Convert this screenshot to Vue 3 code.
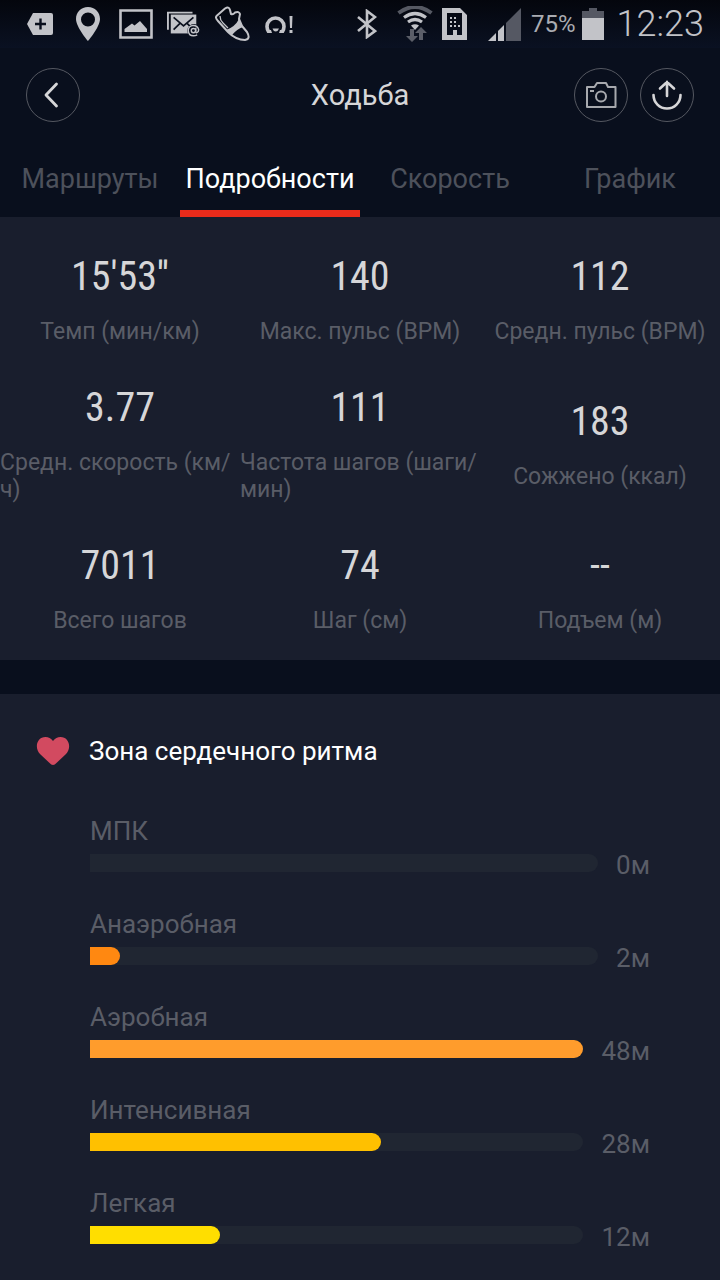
<script setup>
import { ref } from 'vue'

const tabs = ['Маршруты', 'Подробности', 'Скорость', 'График']
const active = ref(1)

const stats = [
  { value: "15'53''", label: 'Темп (мин/км)' },
  { value: '140', label: 'Макс. пульс (BPM)' },
  { value: '112', label: 'Средн. пульс (BPM)' },
  { value: '3.77', label: 'Средн. скорость (км/\u200bч)' },
  { value: '111', label: 'Частота шагов (шаги/\u200bмин)' },
  { value: '183', label: 'Сожжено (ккал)' },
  { value: '7011', label: 'Всего шагов' },
  { value: '74', label: 'Шаг (см)' },
  { value: '--', label: 'Подъем (м)' }
]

const zones = [
  { name: 'МПК', minutes: 0, share: 0, color: '#ff7a00' },
  { name: 'Анаэробная', minutes: 2, share: 5.9, color: '#ff8811' },
  { name: 'Аэробная', minutes: 48, share: 100, color: '#ff9c2c' },
  { name: 'Интенсивная', minutes: 28, share: 59, color: '#ffc000' },
  { name: 'Легкая', minutes: 12, share: 26.4, color: '#ffde00' }
]
</script>

<template>
  <div class="page">
    <div class="status">
      <div class="status-left">
        <svg width="26" height="22" viewBox="0 0 26 22"><path d="M6 0H24a2 2 0 0 1 2 2V20a2 2 0 0 1-2 2H6L0 11Z" fill="#c2c3c8" /><path d="M13.500 5.500V16.500M8 11H19" stroke="#0a0f1d" stroke-width="2.400" /></svg>
        <svg width="24" height="34" viewBox="0 0 24 34"><path fill-rule="evenodd" d="M12 0C5 0 0 5.200 0 12C0 20 12 34 12 34S24 20 24 12C24 5.200 19 0 12 0ZM12 5.500a7 7 0 1 1 0 14a7 7 0 0 1 0-14Z" fill="#c2c3c8" /></svg>
        <svg width="34" height="30" viewBox="0 0 34 30"><path d="M1.500 1.500H32.500V28.500H1.500Z" fill="none" stroke="#c2c3c8" stroke-width="2.600" /><path d="M5.500 23V20L13 14.500L15.500 16.500L21 12L28 20V23Z" fill="#c2c3c8" /></svg>
        <svg width="34" height="28" viewBox="0 0 36 28"><path d="M1 20V2H27" fill="none" stroke="#c2c3c8" stroke-width="2" /><path d="M4 4H31V24H4Z" fill="#c2c3c8" /><path d="M7 7L17.500 16L28 7M7 20L14 13M21 13L25 17" fill="none" stroke="#0a0f1d" stroke-width="1.800" /><circle cx="28.500" cy="21" r="7" fill="#0a0f1d" /><circle cx="28" cy="21" r="2.300" fill="none" stroke="#c2c3c8" stroke-width="1.500" /><path d="M30.500 18V22Q30.500 24 32 23Q33.500 22 33.500 20Q32.500 15.500 28 15.500Q22.500 16 22.500 21Q23 26.500 28 26.500Q30 26.500 32 25.500" fill="none" stroke="#c2c3c8" stroke-width="1.500" /></svg>
        <svg width="36" height="36" viewBox="0 0 36 36"><path d="M1.500 10L10 2.500Q14 0 15 4L16 8Q18 9 20 6.500Q24 5 25 8L24 13L27 20L32 26Q36 33 30 34Q21 34 13 26L3 15Q0 12 1.500 10Z" fill="none" stroke="#c2c3c8" stroke-width="2" stroke-linejoin="round" /><path d="M11 24Q20 21 24 13L28 21Q22 23 17 29Z" fill="#c2c3c8" /><path d="M5 10Q5 14 8 17L13 22" fill="none" stroke="#c2c3c8" stroke-width="1.300" /></svg>
        <svg width="28" height="17" viewBox="0 0 28 17"><path d="M4.500 17Q2 14 2 10.500A8.500 8.500 0 0 1 19 10.500Q19 14 16.500 17" fill="none" stroke="#c2c3c8" stroke-width="3.600" /><path d="M2 14H6L7 17H4ZM19 14H15L14 17H17Z" fill="#c2c3c8" /><path d="M7.500 12.500H14Q13 15.500 10.700 15.500T7.500 12.500Z" fill="#c2c3c8" /><path d="M24.500 0H27.500L27 12H25ZM24.500 14H27.500V17H24.500Z" fill="#c2c3c8" /></svg>
      </div>
      <div class="status-right">
        <svg class="bt" width="20" height="30" viewBox="0 0 20 30"><path d="M1 8L18 22L10 28V2L18 8L1 22" fill="none" stroke="#c2c3c8" stroke-width="2.600" /></svg>
        <svg class="wifi" width="36" height="36" viewBox="0 0 36 36"><path d="M1.500 7Q18-5 34.500 7" fill="none" stroke="#565963" stroke-width="4" /><path d="M7 11.500Q18 3.500 29 11.500M11 16Q18 11 25 16" fill="none" stroke="#c2c3c8" stroke-width="3.200" /><path d="M14 19.500Q18 17 22 19.500L18 24Z" fill="#c2c3c8" /><path d="M13 23H17V30H21L15 36L9 30H13ZM22 34V27H18L24 21L30 27H26V34Z" fill="#5b5e68" /></svg>
        <svg class="sim" width="25" height="32" viewBox="0 0 25 32"><path fill-rule="evenodd" d="M0 0H18L25 7V32H0ZM5 5V27H11V22H15V27H20V5Z" fill="#c2c3c8" /><path d="M8 10H10M12 10H14M8 14H10M12 14H14M8 18H10M12 18H14M16 18H18" stroke="#c2c3c8" stroke-width="2" /></svg>
        <svg class="signal" width="33" height="33" viewBox="0 0 33 33"><path d="M0 33L8 25V33Z" fill="#c2c3c8" /><path d="M10 23L16 17V33H10Z" fill="#c2c3c8" /><path d="M18 15L33 0V33H18Z" fill="#555863" /></svg>
        <span class="percent">75%</span>
        <svg class="battery" width="22" height="32" viewBox="0 0 22 32"><path d="M7 0H15V3H22V10H0V3H7Z" fill="#555863" /><path d="M0 10H22V32H0Z" fill="#c2c3c8" /></svg>
        <span class="clock">12:23</span>
      </div>
    </div>

    <header class="header">
      <button class="round" aria-label="Назад"><svg width="52" height="52" viewBox="0 0 52 52"><path d="M29.500 15L19 26L29.500 37" fill="none" stroke="#d6d6d8" stroke-width="2.800" stroke-linecap="round" stroke-linejoin="round" /></svg></button>
      <h1>Ходьба</h1>
      <div class="actions">
        <button class="round" aria-label="Камера"><svg width="52" height="52" viewBox="0 0 52 52" fill="none" stroke="#a7a9ae" stroke-width="2"><path d="M12 18H19.500L22 14H31L33 18H40.500V38H12Z" stroke-linejoin="round" /><circle cx="26" cy="27.500" r="5" /><path d="M15 22H19" /></svg></button>
        <button class="round" aria-label="Поделиться"><svg width="52" height="52" viewBox="0 0 52 52" fill="none" stroke="#d6d6d8" stroke-width="2.600" stroke-linecap="round"><path d="M26 27V13M19 19.500L26 13L33 19.500M12.500 26A13.500 13.500 0 0 0 39.500 26" /></svg></button>
      </div>
    </header>

    <nav class="tabs">
      <button v-for="(t, i) in tabs" :key="t" :class="{ active: i === active }" @click="active = i">{{ t }}</button>
    </nav>

    <section class="stats">
      <div v-for="s in stats" :key="s.label" class="stat">
        <span class="value">{{ s.value }}</span>
        <span class="label">{{ s.label }}</span>
      </div>
    </section>

    <section class="zones">
      <h2>
        <svg width="34" height="30" viewBox="0 0 34 30"><path d="M17 29Q15.500 29 13 26.500L4 18C-2 11.500 1 1 9.500 1Q14 1 17 5Q20 1 24.500 1C33 1 36 11.500 30 18L21 26.500Q18.500 29 17 29Z" fill="#d24a60" /></svg>
        Зона сердечного ритма
      </h2>
      <div v-for="z in zones" :key="z.name" class="zone">
        <div class="name">{{ z.name }}</div>
        <div class="line">
          <div class="track"><div class="fill" :style="{ width: z.share + '%', background: z.color }"></div></div>
          <span class="minutes">{{ z.minutes }}м</span>
        </div>
      </div>
    </section>
  </div>
</template>

<style>
body { background: #090f1d; }
</style>

<style scoped>
.page {
  min-height: 100vh;
  display: flex;
  flex-direction: column;
  background: #090f1d;
  color: #d6d6d8;
  font-family: Roboto, "Noto Sans", sans-serif;
}
svg { display: block; flex: none; }
button {
  border: 0;
  padding: 0;
  background: none;
  color: inherit;
  font: inherit;
}
.status {
  height: 48px;
  padding: 0 16px 0 27px;
  display: flex;
  align-items: center;
  justify-content: space-between;
  background: linear-gradient(#04060d, #0a1122);
}
.status-left, .status-right { display: flex; align-items: center; }
.status-left { gap: 14px; }
.status-left svg:nth-child(1) { margin-right: 9px; }
.status-left svg:nth-child(2) { margin-right: 5px; }
.bt { margin-right: 20px; }
.wifi { margin-right: 9px; }
.sim { margin-right: 21px; }
.signal { margin-right: 10px; }
.percent { font-size: 24px; color: #aaacb2; margin-right: 6px; }
.battery { margin-right: 13px; }
.clock { font-size: 36px; font-weight: 300; color: #c2c3c8; }
.header {
  height: 94px;
  padding: 0 26px;
  display: grid;
  grid-template-columns: 1fr auto 1fr;
  align-items: center;
}
.round {
  width: 54px;
  height: 54px;
  border: 1px solid #555861;
  border-radius: 50%;
}
h1 { margin: 0; font-size: 29px; font-weight: 400; }
.actions { display: flex; justify-content: flex-end; gap: 12px; }
.tabs { display: grid; grid-template-columns: repeat(4, 1fr); }
.tabs button {
  height: 75px;
  padding-top: 6px;
  border-bottom: 7px solid transparent;
  font-size: 27px;
  color: #4d515b;
}
.tabs .active { color: #fff; border-color: #ea2b1b; }
.stats {
  padding: 31px 0 26px;
  display: grid;
  grid-template-columns: repeat(3, 1fr);
  row-gap: 34px;
  align-items: center;
  background: #191e2d;
}
.stat {
  display: flex;
  flex-direction: column;
  align-items: center;
  gap: 12px;
}
.value {
  font-family: "Roboto Condensed", "Liberation Sans Narrow", "Liberation Sans", sans-serif;
  font-size: 40px;
  line-height: 58px;
}
.label { font-size: 23px; line-height: 27px; color: #5a5d67; }
.zones {
  flex: 1;
  margin-top: 34px;
  padding: 40px 70px 0 90px;
  background: #191e2d;
}
h2 {
  margin: 0 0 47px -54px;
  display: flex;
  align-items: center;
  gap: 19px;
  font-size: 26px;
  font-weight: 400;
  line-height: 34px;
  color: #fff;
}
.zone { margin-bottom: 35px; color: #5a5d67; font-size: 26px; }
.name { line-height: 32px; margin-bottom: 7px; }
.line { display: flex; gap: 18px; height: 19px; }
.track {
  flex: 1;
  height: 18px;
  border-radius: 0 9px 9px 0;
  background: #202632;
}
.fill { height: 18px; border-radius: 0 9px 9px 0; }
.minutes { line-height: 22px; }
</style>
